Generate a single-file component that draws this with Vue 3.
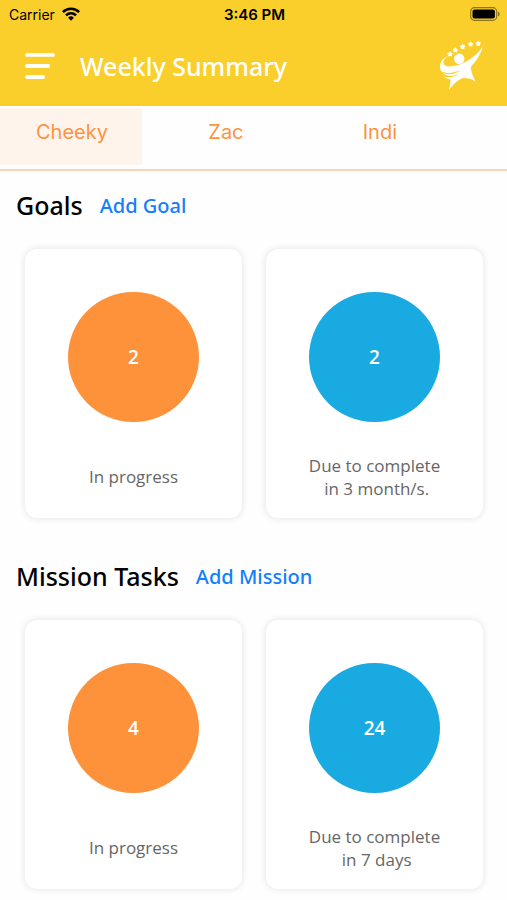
<script setup>
import { ref } from 'vue'

const tabs = ['Cheeky', 'Zac', 'Indi']
const active = ref('Cheeky')

const sections = [
  {
    title: 'Goals',
    action: 'Add Goal',
    cards: [
      { tone: 'orange', count: 2, text: 'In progress' },
      { tone: 'blue', count: 2, text: 'Due to complete\n in 3 month/s.' }
    ]
  },
  {
    title: 'Mission Tasks',
    action: 'Add Mission',
    cards: [
      { tone: 'orange', count: 4, text: 'In progress' },
      { tone: 'blue', count: 24, text: 'Due to complete\n in 7 days' }
    ]
  }
]

const stars = [
  { x: 12, y: 13 },
  { x: 17.3, y: 9 },
  { x: 24.6, y: 5.7 },
  { x: 32.6, y: 3.1 },
  { x: 40.2, y: 2.5 }
]
</script>

<template>
  <div class="screen">
    <header class="top">
      <div class="status">
        <span class="carrier">
          Carrier
          <svg class="wifi" viewBox="0 0 18 14" aria-hidden="true">
            <g fill="none" stroke="#000" stroke-width="2.6">
              <path d="M0.9 5.1a11.5 11.5 0 0 1 16.2 0" />
              <path d="M4 8.3a7.1 7.1 0 0 1 10 0" />
            </g>
            <path d="M6.1 10.7a4.1 4.1 0 0 1 5.8 0L9 13.7z" />
          </svg>
        </span>
        <span class="time">3:46 PM</span>
        <span class="power">
          <svg class="battery" viewBox="0 0 30 14" aria-hidden="true">
            <rect x="0.7" y="0.7" width="26" height="12.6" rx="3.8" fill="none" stroke="#8a7318" stroke-width="1.2" />
            <rect x="2.5" y="2.4" width="22.4" height="9.2" rx="2" />
            <path d="M28 4.7c2.2 0.6 2.2 4 0 4.6z" fill="#8a7318" />
          </svg>
        </span>
      </div>
      <div class="bar">
        <button class="menu" type="button" aria-label="Menu">
          <svg viewBox="0 0 30 28" aria-hidden="true">
            <g stroke="#fff" stroke-width="3.8" stroke-linecap="round">
              <path d="M2 2.9H28M2 14H23.2M2 25H18" />
            </g>
          </svg>
        </button>
        <h1>Weekly Summary</h1>
        <svg class="logo" viewBox="0 -1 46 52" fill="#fff" aria-hidden="true">
          <circle cx="21.2" cy="17.8" r="5.2" />
          <path
            v-for="star in stars"
            :key="star.x"
            :transform="`translate(${star.x} ${star.y})`"
            d="M0-1.9l.6 1.200 1.300.2-.9.9.2 1.300L0 1.100l-1.200.6.2-1.300-.9-.9 1.300-.2z"
            stroke="#fff"
            stroke-width="1.3"
            stroke-linejoin="round"
          />
          <path d="M10.800 14.200C5 17 1.600 21.500 2 26.500c.2 1.800 1 3.200 2 4.300 4.500 2.600 12.500 1.200 17.500-.8L33 25.500C38.500 20 42.500 13.500 44.800 6 40.500 11.500 35 16.800 28.800 20.300 21 24.600 11.500 27 7.300 24.600c-3.600-2.300-1.800-6.800 3.500-10.400z" />
          <path d="M4.200 31.800c4.500 2.400 11.500 1.600 17.800-1l-1 3.200c-6 1.500-12.800 1.400-16.800-2.200z" />
          <path d="M6 35.300c3.800 1.500 8.500 1.100 15-1.300l-3 4c-4.500 1.100-9.300.4-12-2.700z" />
          <path d="M20 29.500L34.500 22c-1.300 2.600-1.900 4.300-1.500 6.300.7 4 2.300 7.700 4.500 12.200-3.500-2.500-7.500-3.600-12.500-3.500C20 39 16 42.500 10.800 49c1.200-4.500 1.900-7.700 1.700-11z" />
          <g fill="none" stroke="#fbcf2b" stroke-width=".8">
            <path d="M3.500 30.900c4.500 2.500 11.500 1.800 18-1" />
            <path d="M5.500 34.600c4 1.600 9 1.300 14.500-1" />
          </g>
        </svg>
      </div>
    </header>

    <nav class="tabs" aria-label="Children">
      <button
        v-for="tab in tabs"
        :key="tab"
        type="button"
        class="tab"
        :class="{ active: tab === active }"
        @click="active = tab"
      >{{ tab }}</button>
    </nav>

    <main>
      <section v-for="section in sections" :key="section.title">
        <div class="heading">
          <h2>{{ section.title }}</h2>
          <a href="#">{{ section.action }}</a>
        </div>
        <div class="cards">
          <article v-for="card in section.cards" :key="card.tone" class="card">
            <div class="count" :class="card.tone">{{ card.count }}</div>
            <p class="label"><span>{{ card.text }}</span></p>
          </article>
        </div>
      </section>
    </main>
  </div>
</template>

<style>
body {
  margin: 0;
  background: #fefefe;
}
</style>

<style scoped>
.screen {
  font-family: "Open Sans", "Noto Sans", sans-serif;
  color: #000;
}
.top {
  background: #fbcf2b;
}
.status {
  display: grid;
  grid-template-columns: 1fr auto 1fr;
  align-items: center;
  height: 28px;
  padding: 0 7px 0 9px;
  font-family: Inter, "Liberation Sans", sans-serif;
  font-size: 14px;
}
.carrier {
  display: flex;
  align-items: center;
  gap: 7px;
}
.wifi {
  width: 18px;
  height: 14px;
}
.time {
  font-size: 15px;
  font-weight: 600;
}
.power {
  display: flex;
  justify-content: flex-end;
}
.battery {
  width: 30px;
  height: 14px;
}
.bar {
  display: flex;
  align-items: center;
  height: 76px;
  padding: 0 23px 2px 25px;
}
.menu {
  padding: 0;
  border: 0;
  background: none;
}
.menu svg {
  display: block;
  width: 30px;
  height: 28px;
}
h1 {
  flex: 1;
  margin: 0 0 0 25px;
  font-family: "Noto Sans", "Open Sans", sans-serif;
  font-size: 25px;
  font-weight: 500;
  line-height: 32px;
  color: #fff;
}
.logo {
  width: 46px;
  height: 52px;
}
.tabs {
  display: flex;
  gap: 12px;
  padding: 2px 0 4px;
  border-bottom: 2px solid #fad4b8;
}
.tab {
  flex: 0 0 28%;
  height: 57px;
  padding: 0 0 10px 2px;
  border: 0;
  background: none;
  font-family: Inter, "Liberation Sans", sans-serif;
  font-size: 20px;
  color: #fb9341;
}
.tab.active {
  background: #fff4ec;
}
main {
  padding-bottom: 10px;
}
.heading {
  display: flex;
  align-items: center;
  gap: 17px;
  height: 70px;
  padding: 0 16px;
}
section + section .heading {
  margin-top: 24px;
}
h2 {
  margin: 0;
  padding-bottom: 2px;
  font-family: "Noto Sans", "Open Sans", sans-serif;
  font-size: 25px;
  font-weight: 500;
  line-height: 32px;
}
.heading a {
  font-family: "Noto Sans", "Open Sans", sans-serif;
  font-size: 20px;
  font-weight: 500;
  line-height: 28px;
  color: #147efb;
  text-decoration: none;
}
.cards {
  display: grid;
  grid-template-columns: 1fr 1fr;
  gap: 24px;
  padding: 8px 24px 0 25px;
}
.card {
  display: flex;
  flex-direction: column;
  align-items: center;
  gap: 31px;
  padding: 43px 0 18px;
  border-radius: 12px;
  background: #fff;
  box-shadow: 0 0 6px 1px rgba(0, 0, 0, 0.09);
}
.count {
  display: flex;
  align-items: center;
  justify-content: center;
  width: 60%;
  aspect-ratio: 1;
  border-radius: 50%;
  font-size: 19px;
  font-weight: 600;
  color: #fff;
}
.orange {
  background: #fe923b;
}
.blue {
  background: #19aae1;
}
.label {
  display: flex;
  align-items: center;
  min-height: 47px;
  margin: 0;
  font-size: 17px;
  line-height: 23px;
  text-align: center;
  white-space: pre-wrap;
  color: #666;
}
</style>
